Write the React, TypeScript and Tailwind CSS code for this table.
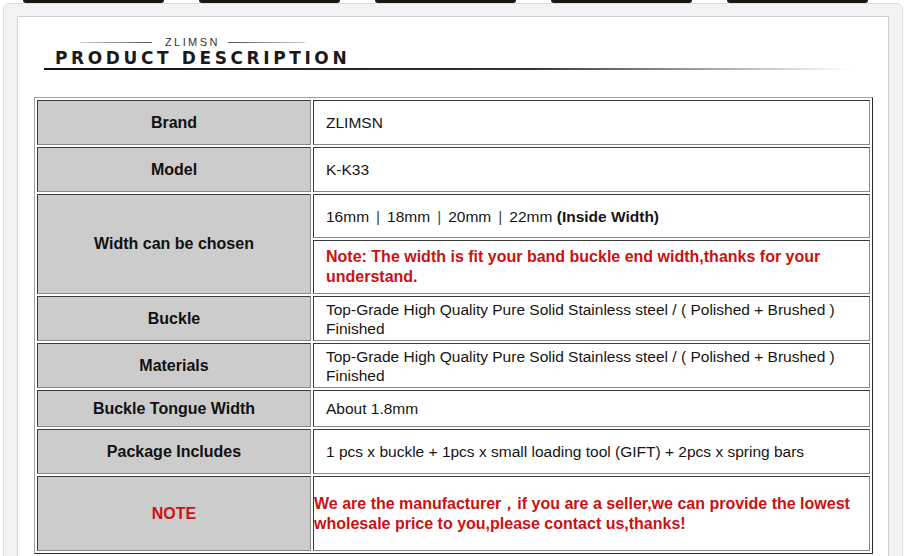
import React from 'react';

type Row = {
  label: string;
  labelRed?: boolean;
  values: { content: React.ReactNode; h: string; red?: boolean; flush?: boolean }[];
};

const widths = ['16mm', '18mm', '20mm', '22mm'];

const rows: Row[] = [
  { label: 'Brand', values: [{ content: 'ZLIMSN', h: 'h-[45px]' }] },
  { label: 'Model', values: [{ content: 'K-K33', h: 'h-[45px]' }] },
  {
    label: 'Width can be chosen',
    values: [
      {
        content: (
          <>
            {widths.map((w, i) => (
              <React.Fragment key={w}>
                {i > 0 && <span className="mx-[7px] text-[#444]">|</span>}
                {w}
              </React.Fragment>
            ))}{' '}
            <span className="font-bold">(Inside Width)</span>
          </>
        ),
        h: 'h-[44px]',
      },
      {
        content: 'Note: The width is fit your band buckle end width,thanks for your understand.',
        h: 'h-[54px]',
        red: true,
      },
    ],
  },
  {
    label: 'Buckle',
    values: [
      {
        content: 'Top-Grade High Quality Pure Solid Stainless steel / ( Polished + Brushed ) Finished',
        h: 'h-[45px]',
      },
    ],
  },
  {
    label: 'Materials',
    values: [
      {
        content: 'Top-Grade High Quality Pure Solid Stainless steel / ( Polished + Brushed ) Finished',
        h: 'h-[45px]',
      },
    ],
  },
  { label: 'Buckle Tongue Width', values: [{ content: 'About 1.8mm', h: 'h-[37px]' }] },
  {
    label: 'Package Includes',
    values: [
      { content: '1 pcs x buckle + 1pcs x small loading tool (GIFT) + 2pcs x spring bars', h: 'h-[45px]' },
    ],
  },
  {
    label: 'NOTE',
    labelRed: true,
    values: [
      {
        content: 'We are the manufacturer，if you are a seller,we can provide the lowest wholesale price to you,please contact us,thanks!',
        h: 'h-[75px]',
        red: true,
        flush: true,
      },
    ],
  },
];

const cell = 'border-t border-l border-t-[#3a3a3a] border-l-[#3a3a3a] border-b border-r border-b-[#8a8a8a] border-r-[#8a8a8a]';

export default function App() {
  return (
    <div
      className="w-[905px] h-[556px] overflow-hidden bg-white"
      style={{ fontFamily: '"Liberation Sans", Arial, sans-serif' }}
    >
      {/* top tabs */}
      <div className="flex h-[3px] pl-[23px] gap-[35px]">
        {[0, 1, 2, 3, 4].map((i) => (
          <div key={i} className="w-[141px] h-[3px] rounded-b-[3px] bg-[#17170f]" />
        ))}
      </div>

      {/* panel */}
      <div className="ml-[3px] w-[900px] h-[600px] border border-[#dedede] rounded-t-[6px] bg-[#f3f3f3] pt-[12px] px-[13px]">
        <div className="w-[872px] h-[600px] border border-[#d0d0d0] bg-white">
          {/* heading */}
          <div className="mt-[19px] h-[12px] flex items-center pl-[62px]">
            <div className="w-[72px] h-px bg-gradient-to-r from-[#d0d0d0] to-[#555]" />
            <span className="ml-[13px] mr-[8px] text-[11px] leading-[12px] tracking-[2.4px] text-[#333]">ZLIMSN</span>
            <div className="w-[77px] h-px bg-gradient-to-r from-[#555] to-[#d0d0d0]" />
          </div>
          <div
            className="mt-[2px] pl-[37px] text-[17px] leading-[16px] font-bold tracking-[3.6px] text-[#1a1a1a]"
            style={{ fontFamily: '"DejaVu Sans", sans-serif' }}
          >
            PRODUCT DESCRIPTION
          </div>
          <div className="mt-[2px] ml-[26px] w-[806px] h-[2px] bg-gradient-to-r from-[#111] via-[#333] via-60% to-transparent" />

          {/* table */}
          <div className="mt-[27px] ml-[16px] w-[839px] border border-t-[#a0a0a0] border-l-[#a0a0a0] border-b-[#2a2a2a] border-r-[#2a2a2a] p-[2px]">
            <div className="flex flex-col gap-[2px]">
              {rows.map((r) => (
                <div key={r.label} className="flex gap-[2px]">
                  <div
                    className={`${cell} w-[274px] shrink-0 bg-[#cccccc] flex items-center justify-center text-[16px] font-bold ${
                      r.labelRed ? 'text-[#cc1111]' : 'text-[#111]'
                    }`}
                  >
                    {r.label}
                  </div>
                  <div className="w-[557px] flex flex-col gap-[2px]">
                    {r.values.map((v, i) => (
                      <div
                        key={i}
                        className={`${cell} ${v.h} bg-white flex items-center ${
                          v.flush ? 'pl-0 pr-[2px]' : 'pl-[12px] pr-[20px]'
                        } ${
                          v.red
                            ? 'text-[16px] leading-[20px] font-bold text-[#cc1111]'
                            : 'text-[15.5px] leading-[19px] text-[#151515]'
                        }`}
                      >
                        <div>{v.content}</div>
                      </div>
                    ))}
                  </div>
                </div>
              ))}
            </div>
          </div>
        </div>
      </div>
    </div>
  );
}
